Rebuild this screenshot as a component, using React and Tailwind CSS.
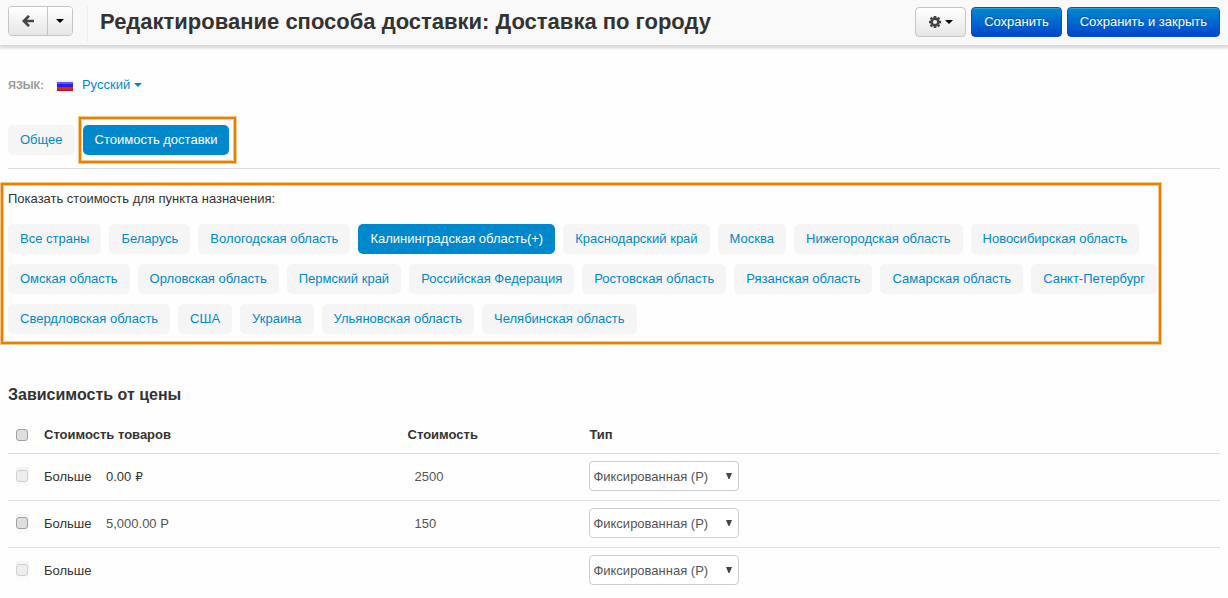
import { useState } from "react";

const tabs = ["Общее", "Стоимость доставки"];

const destinations = [
    "Все страны",
    "Беларусь",
    "Вологодская область",
    "Калининградская область(+)",
    "Краснодарский край",
    "Москва",
    "Нижегородская область",
    "Новосибирская область",
    "Омская область",
    "Орловская область",
    "Пермский край",
    "Российская Федерация",
    "Ростовская область",
    "Рязанская область",
    "Самарская область",
    "Санкт-Петербург",
    "Свердловская область",
    "США",
    "Украина",
    "Ульяновская область",
    "Челябинская область",
];

const rates = [
    { id: 1, fixed: true, amount: "0.00", cost: "2500", disabled: true },
    { id: 2, fixed: false, amount: "5,000.00 Р", cost: "150", disabled: false },
    { id: 3, fixed: false, amount: "", cost: "", disabled: true },
];

function Caret({ className }) {
    return (
        <svg width="8" height="4" viewBox="0 0 8 4" className={className} aria-hidden="true">
            <path d="M0 0h8L4 4z" fill="currentColor" />
        </svg>
    );
}

function ArrowLeft() {
    return (
        <svg width="12" height="12" viewBox="0 0 12 12" fill="none" stroke="#444" aria-hidden="true">
            <path d="M7 0.9 1.9 6 7 11.1" strokeWidth="2.7" />
            <path d="M2 6h10" strokeWidth="2.7" />
        </svg>
    );
}

function Gear() {
    return (
        <svg width="12" height="12" viewBox="-6 -6 12 12" stroke="#444" fill="none" aria-hidden="true">
            <circle r="3.4" strokeWidth="2.6" />
            <path
                d="M0-6v2M0 4v2M-6 0h2M4 0h2M-4.4-4.4l1.4 1.4M3 3l1.4 1.4M-4.4 4.4l1.4-1.4M3-3l1.4-1.4"
                strokeWidth="2.6"
            />
        </svg>
    );
}

function Flag() {
    return (
        <svg width="16" height="11" viewBox="0 0 16 11" aria-hidden="true">
            <path d="M0 0h16v4H0z" fill="#f1f1f6" />
            <path d="M0 2h16v5H0z" fill="#2222e8" />
            <path d="M0 2h16v2H0z" fill="#5c5cf2" />
            <path d="M0 7h16v4H0z" fill="#f01a22" />
            <path d="M0 10h16v1H0z" fill="#b80d18" />
        </svg>
    );
}

// orange frame laid over the content it points to
function Highlight({ className }) {
    return (
        <span
            className={`pointer-events-none absolute border-2 border-[#e68200] shadow-[0_0_0_1px_#f3c68c,inset_0_0_0_1px_#f3c68c] ${className}`}
        />
    );
}

function Pill({ active, onClick, children }) {
    const color = active ? "bg-[#0088cc] text-white" : "bg-[#f5f5f5] text-[#0088cc]";
    return (
        <button type="button" onClick={onClick} className={`h-[30px] rounded-[5px] px-3 whitespace-nowrap ${color}`}>
            {children}
        </button>
    );
}

function CheckBox({ label, disabled }) {
    return (
        <input
            type="checkbox"
            aria-label={label}
            disabled={disabled}
            className="block size-3 appearance-none rounded-[3px] border border-[#a0a0a0] bg-[#dedede] checked:bg-[#0088cc] disabled:border-[#d0d0d0] disabled:bg-[#eeeeee]"
        />
    );
}

function RateRow({ rate }) {
    return (
        <tr className="border-t border-[#dddddd]">
            <td className="pt-2 pb-2 pl-2">
                <div className="h-5 w-[13px] bg-linear-to-b from-[#f3f3f3] to-[#fbfbfb] pt-[3px]">
                    <CheckBox label={`Выбрать ${rate.id}`} disabled={rate.disabled} />
                </div>
            </td>
            <td className="pt-2 pb-2">
                <div className="flex items-center">
                    <span className="w-[62px]">Больше</span>
                    {rate.fixed ? (
                        <span className="flex h-[30px] items-center gap-1">
                            {rate.amount}
                            <span className="font-['DejaVu_Sans',sans-serif] text-xs">₽</span>
                        </span>
                    ) : (
                        <input
                            aria-label="Стоимость товаров"
                            defaultValue={rate.amount}
                            className="h-[30px] w-32 text-[#555]"
                        />
                    )}
                </div>
            </td>
            <td className="pt-2 pb-2">
                <input aria-label="Стоимость" defaultValue={rate.cost} className="block h-[30px] w-32 px-[7px] text-[#555]" />
            </td>
            <td className="pt-[7px] pb-[9px]">
                <div className="relative w-[150px]">
                    <select
                        aria-label="Тип"
                        className="block h-[30px] w-full appearance-none rounded-[4px] border border-[#ccc] bg-white px-[3px] pt-[2px] text-[#555]"
                    >
                        <option>Фиксированная (Р)</option>
                        <option>Процент (%)</option>
                    </select>
                    <svg
                        width="6"
                        height="6"
                        viewBox="0 0 6 6"
                        className="pointer-events-none absolute top-3 right-[7px]"
                        aria-hidden="true"
                    >
                        <path d="M0 0h6L3.5 6h-1z" fill="#444" />
                    </svg>
                </div>
            </td>
        </tr>
    );
}

export default function App() {
    const [tab, setTab] = useState("Стоимость доставки");
    const [destination, setDestination] = useState("Калининградская область(+)");

    const greyBtn = "flex items-center justify-center bg-linear-to-b from-white to-[#e6e6e6]";
    const blueBtn =
        "h-[30px] rounded-[4px] border border-[#0055bb] bg-linear-to-b from-[#0088cc] to-[#0044cc] px-3 whitespace-nowrap text-white shadow-[inset_0_1px_0_rgba(255,255,255,0.2)] text-shadow-[0_-1px_0_rgba(0,0,0,0.25)]";

    return (
        <div className="min-h-screen bg-[#fefefe] font-['Liberation_Sans',Arial,sans-serif] text-[13px] leading-5 text-[#333]">
            <header className="flex h-[45px] items-start bg-[#f9f9f9] px-2 pt-[6px] shadow-[0_2px_3px_1px_rgba(0,0,0,0.16)]">
                <div className="flex h-[30px] overflow-hidden rounded-[4px] border border-[#c5c5c5]">
                    <button type="button" aria-label="Назад" className={`${greyBtn} w-[39px] border-r border-[#c5c5c5]`}>
                        <ArrowLeft />
                    </button>
                    <button type="button" aria-label="Меню" className={`${greyBtn} w-6 text-black`}>
                        <Caret />
                    </button>
                </div>
                <div className="mr-3 ml-[14px] h-9 border-l border-[#ececec]" />
                <h1 className="text-[22px] leading-8 font-bold whitespace-nowrap">
                    Редактирование способа доставки: Доставка по городу
                </h1>
                <div className="ml-auto flex gap-[5px] pt-px">
                    <button
                        type="button"
                        aria-label="Настройки"
                        className={`${greyBtn} h-[30px] w-[51px] gap-1 rounded-[4px] border border-[#c5c5c5] text-black`}
                    >
                        <Gear />
                        <Caret />
                    </button>
                    <button type="button" className={blueBtn}>
                        Сохранить
                    </button>
                    <button type="button" className={blueBtn}>
                        Сохранить и закрыть
                    </button>
                </div>
            </header>

            <main className="px-2 pt-[30px]">
                <div className="flex items-center">
                    <span className="text-[11px] font-bold text-[#999] uppercase">Язык:</span>
                    <button type="button" className="ml-[13px] flex items-center text-[#0088cc]">
                        <Flag />
                        <span className="ml-[9px]">Русский</span>
                        <Caret className="ml-1" />
                    </button>
                </div>

                <nav className="mt-[30px] flex gap-2 border-b border-[#dddddd] pb-[13px]">
                    {tabs.map((name) => (
                        <div key={name} className="relative">
                            <Pill active={tab === name} onClick={() => setTab(name)}>
                                {name}
                            </Pill>
                            {name === "Стоимость доставки" && <Highlight className="-inset-y-2 -right-[7px] -left-1" />}
                        </div>
                    ))}
                </nav>

                <section className="relative mt-[14px] mr-[59px] pt-[6px] pb-[10px]">
                    <p>Показать стоимость для пункта назначения:</p>
                    <div className="mt-[15px] flex flex-wrap gap-x-2 gap-y-[10px]">
                        {destinations.map((name) => (
                            <Pill key={name} active={destination === name} onClick={() => setDestination(name)}>
                                {name}
                            </Pill>
                        ))}
                    </div>
                    <Highlight className="inset-y-0 right-0 -left-[7px]" />
                </section>

                <h2 className="mt-[41px] text-base leading-5 font-bold">Зависимость от цены</h2>
                <table className="mt-[10px] w-full table-fixed border-collapse text-left">
                    <thead>
                        <tr>
                            <th className="h-[38px] w-9 pt-[2px] pl-2">
                                <CheckBox label="Выбрать все" />
                            </th>
                            <th className="w-[30%] pt-[2px]">Стоимость товаров</th>
                            <th className="w-[15%] pt-[2px]">Стоимость</th>
                            <th className="pt-[2px]">Тип</th>
                        </tr>
                    </thead>
                    <tbody>
                        {rates.map((rate) => (
                            <RateRow key={rate.id} rate={rate} />
                        ))}
                    </tbody>
                </table>
            </main>
        </div>
    );
}
